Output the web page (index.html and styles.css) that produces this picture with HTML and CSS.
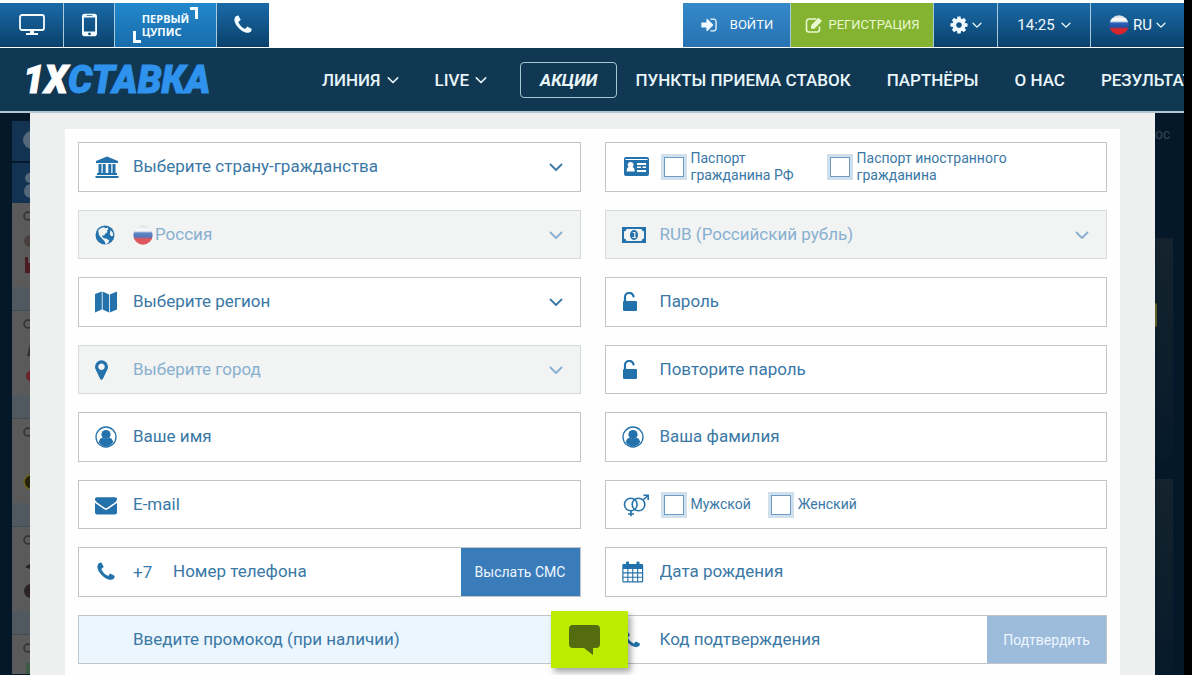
FILE: index.html
```html
<!DOCTYPE html>
<html lang="ru">
<head>
<meta charset="utf-8">
<meta name="viewport" content="width=device-width, initial-scale=1">
<title>1XСТАВКА — Регистрация</title>
<link rel="stylesheet" href="styles.css">
</head>
<body>
<svg class="sprite" aria-hidden="true">
  <symbol id="chevron" viewBox="0 0 14 14"><path d="M1.500 4.500 7 10l5.500-5.500" fill="none" stroke="currentColor" stroke-width="1.800" stroke-linecap="round" stroke-linejoin="round"/></symbol>
  <symbol id="phone" viewBox="0 0 1792 1792"><path d="M1600 1240q0 27-10 70.500t-21 68.500q-21 50-122 106-94 51-186 51-27 0-53-3.500t-57.500-12.500-47-14.500-55.500-20.500-49-18q-98-35-175-83-127-79-264-216t-216-264q-48-77-83-175-3-9-18-49t-20.500-55.500-14.500-47-12.500-57.500-3.500-53q0-92 51-186 56-101 106-122 25-11 68.500-21t70.500-10q14 0 21 3 18 6 53 76 11 19 30 54t35 63.500 31 53.500q3 4 17.500 25t21.500 35.500 7 28.500q0 20-28.500 50t-62 55-62 53-28.500 46q0 9 5 22.500t8.500 20.500 14 24 11.500 19q76 137 174 235t235 174q2 1 19 11.500t24 14 20.500 8.500 22.500 5q18 0 46-28.500t53-62 55-62 50-28.500q14 0 28.500 7t35.500 21.500 25 17.500q25 15 53.500 31t63.500 35 54 30q70 35 76 53 3 7 3 21z"/></symbol>
  <symbol id="flag" viewBox="0 0 20 20">
    <linearGradient id="stripes" x1="0" y1="0" x2="0" y2="1"><stop offset=".05" stop-color="#d9dde0"/><stop offset=".2" stop-color="#fafbfc"/><stop offset=".3" stop-color="#f4f6f8"/><stop offset=".4" stop-color="#2b63b8"/><stop offset=".6" stop-color="#1f4fa5"/><stop offset=".7" stop-color="#d8242c"/></linearGradient>
    <circle cx="10" cy="10" r="9.700" fill="url(#stripes)"/>
  </symbol>
  <symbol id="user" viewBox="0 0 22 22"><circle cx="11" cy="11" r="10" fill="none" stroke="currentColor" stroke-width="1.300"/><circle cx="11" cy="8.500" r="4.600"/><path d="M3.800 16c.6-3 2.300-4.200 4-4.300 1.900 1.700 4.500 1.700 6.400 0 1.700.1 3.400 1.300 4 4.300A9.500 9.500 0 0 1 11 20.500 9.500 9.500 0 0 1 3.800 16z"/></symbol>
  <symbol id="lock" viewBox="0 0 16 20"><path d="M3 10V5.500a4.300 4.300 0 0 1 8.500-1.200" fill="none" stroke="currentColor" stroke-width="2.200" stroke-linecap="round"/><rect x="1" y="9" width="14" height="10" rx="1"/></symbol>
</svg>

<header>
  <div class="topbar">
    <nav class="tools" aria-label="Приложения">
      <a class="tool tool-desktop" href="#" aria-label="Компьютер"><svg class="ic-desktop" viewBox="0 0 26 22"><rect x="1" y="1" width="24" height="15" rx="2" fill="none" stroke="currentColor" stroke-width="1.800"/><path d="M11 16h4v3h4v2H7v-2h4z"/></svg></a>
      <a class="tool tool-mobile" href="#" aria-label="Телефон"><svg class="ic-mobile" viewBox="0 0 16 24"><path fill-rule="evenodd" d="M3 0h10a3 3 0 0 1 3 3v18a3 3 0 0 1-3 3H3a3 3 0 0 1-3-3V3a3 3 0 0 1 3-3zM2 4v15h12V4zM5 1.500v1h6v-1zM8 20a1.500 1.500 0 1 0 .01 0z"/></svg></a>
      <a class="tool tool-wallet" href="#"><svg class="corner corner-bottom" viewBox="0 0 8 12"><path d="M0 0h3v9h5v3H0z"/></svg><span class="wallet-name"><span>ПЕРВЫЙ</span><span>ЦУПИС</span></span><svg class="corner" viewBox="0 0 8 12"><path d="M0 0h8v12H5V3H0z"/></svg></a>
      <a class="tool tool-call" href="#" aria-label="Позвонить"><svg class="ic-22"><use href="#phone"/></svg></a>
    </nav>
    <div class="account">
      <button class="tab tab-login" type="button"><svg class="ic-18" viewBox="0 0 1792 1792"><path d="M1312 896q0 26-19 45l-544 544q-19 19-45 19t-45-19-19-45v-288h-448q-26 0-45-19t-19-45v-384q0-26 19-45t45-19h448v-288q0-26 19-45t45-19 45 19l544 544q19 19 19 45zm352-352v704q0 119-84.500 203.500t-203.500 84.500h-320q-32 0-32-32v-64q0-32 32-32h320q66 0 113-47t47-113v-704q0-66-47-113t-113-47h-320q-32 0-32-32v-64q0-32 32-32h320q119 0 203.500 84.500t84.500 203.500z"/></svg>ВОЙТИ</button>
      <button class="tab tab-register" type="button"><svg class="ic-18" viewBox="0 0 18 18"><path d="M11 3H4a2.500 2.500 0 0 0-2.500 2.500v8A2.500 2.500 0 0 0 4 16h8a2.500 2.500 0 0 0 2.500-2.500V11" fill="none" stroke="currentColor" stroke-width="1.600" stroke-linecap="round"/><path d="m6 9.500 7.500-7.800L17 5l-7.500 7.800H6z"/></svg>РЕГИСТРАЦИЯ</button>
      <button class="tab tab-settings" type="button" aria-label="Настройки"><svg class="ic-20" viewBox="0 0 1792 1792"><path d="M1152 896q0-106-75-181t-181-75-181 75-75 181 75 181 181 75 181-75 75-181zm512-109v222q0 12-8 23t-20 13l-185 28q-19 54-39 91 35 50 107 138 10 12 10 25t-9 23q-27 37-99 108t-94 71q-12 0-26-9l-138-108q-44 23-91 38-16 136-29 186-7 28-36 28h-222q-14 0-24.500-8.500t-11.500-21.500l-28-184q-49-16-90-37l-141 107q-10 9-25 9-14 0-25-11-126-114-165-168-7-10-7-23 0-12 8-23 15-21 51-66.500t54-70.500q-27-50-41-99l-183-27q-13-2-21-12.500t-8-23.500v-222q0-12 8-23t19-13l186-28q14-46 39-92-40-57-107-138-10-12-10-24 0-10 9-23 26-36 98.500-107.500t94.500-71.500q13 0 26 10l138 107q44-23 91-38 16-136 29-186 7-28 36-28h222q14 0 24.500 8.500t11.500 21.500l28 184q49 16 90 37l142-107q9-9 24-9 13 0 25 10 129 119 165 170 7 8 7 22 0 12-8 23-15 21-51 66.500t-54 70.500q26 50 41 98l183 28q13 2 21 12.500t8 23.500z"/></svg><svg class="ic-10"><use href="#chevron"/></svg></button>
      <button class="tab tab-time" type="button">14:25<svg class="ic-10"><use href="#chevron"/></svg></button>
      <button class="tab tab-lang" type="button"><svg class="ic-20"><use href="#flag"/></svg>RU<svg class="ic-10"><use href="#chevron"/></svg></button>
    </div>
  </div>
  <div class="mainbar">
    <a class="logo" href="#"><span class="logo-mark">1X</span>СТАВКА</a>
    <nav class="menu" aria-label="Меню">
      <a href="#">ЛИНИЯ<svg class="ic-12"><use href="#chevron"/></svg></a>
      <a href="#">LIVE<svg class="ic-12"><use href="#chevron"/></svg></a>
      <a class="promo" href="#">АКЦИИ</a>
      <a href="#">ПУНКТЫ ПРИЕМА СТАВОК</a>
      <a href="#">ПАРТНЁРЫ</a>
      <a href="#">О НАС</a>
      <a href="#">РЕЗУЛЬТАТЫ</a>
    </nav>
  </div>
</header>

<main class="stage">
  <aside class="rail" aria-hidden="true">
    <div class="rail-tab"><svg viewBox="0 0 18 40"><circle cx="20" cy="19" r="9" fill="#56697a"/></svg></div>
    <div class="rail-tab"><svg viewBox="0 0 18 40"><circle cx="18" cy="15" r="5" fill="#56697a"/><circle cx="19" cy="28" r="7" fill="#56697a"/></svg></div>
    <div class="event"><svg viewBox="0 0 18 84"><circle cx="16" cy="13" r="4" fill="none" stroke="#2e2e2e" stroke-width="1.500"/><circle cx="18" cy="38" r="6" fill="#47403f"/><path d="M13 54h3v6h4v10h-7z" fill="#4a1b22"/></svg></div>
    <div class="odds"></div>
    <div class="event"><svg viewBox="0 0 18 84"><circle cx="16" cy="13" r="4" fill="none" stroke="#2e2e2e" stroke-width="1.500"/><path d="M18 33v12h-3z" fill="#303030"/><circle cx="19" cy="65" r="5" fill="#6a2227"/></svg></div>
    <div class="odds"></div>
    <div class="event"><svg viewBox="0 0 18 84"><circle cx="16" cy="13" r="4" fill="none" stroke="#2e2e2e" stroke-width="1.500"/><circle cx="19" cy="63" r="7" fill="#26220c" stroke="#6d661c" stroke-width="1.500"/></svg></div>
    <div class="odds"></div>
    <div class="event"><svg viewBox="0 0 18 84"><circle cx="16" cy="13" r="4" fill="none" stroke="#2e2e2e" stroke-width="1.500"/><path d="m13 40 5-3v5z" fill="#222"/><circle cx="19" cy="64" r="7" fill="#2a2424"/></svg></div>
    <div class="odds"></div>
    <div class="event event-last"><svg viewBox="0 0 18 84"><circle cx="16" cy="13" r="4" fill="none" stroke="#2e2e2e" stroke-width="1.500"/><rect x="14" y="28" width="6" height="20" fill="#3d5a45"/></svg></div>
  </aside>

  <section class="modal">
    <form class="form" aria-label="Регистрация">
      <div class="field">
        <span class="icon"><svg class="ic-24" viewBox="0 0 24 24"><path d="M12 1.500 23 6v2H1V6zM3.500 9h3v9h1.200V9h3v9h2.600V9h3v9h1.200V9h3v9H22v2H2v-2h1.500zM0.500 21h23v2h-23z"/></svg></span>
        <select aria-label="Гражданство"><option>Выберите страну-гражданства</option></select>
        <svg class="arrow"><use href="#chevron"/></svg>
      </div>
      <div class="field">
        <span class="icon"><svg class="ic-28" viewBox="0 0 28 28"><path fill-rule="evenodd" d="M4 4h21a2 2 0 0 1 2 2v15a2 2 0 0 1-2 2H4a2 2 0 0 1-2-2V6a2 2 0 0 1 2-2zM3.500 6v1h22V6zM8.500 9a2.800 2.800 0 0 0-1.800 5c-1.500.5-2 1.800-2 4.500h8c0-2.700-.7-4-2.200-4.500a2.800 2.800 0 0 0-2-5zM15 10v2h9v-2zM15 13.500v1.500h4v-1.500zM20.500 13.500v1.500H24v-1.500zM15 17v2h9v-2z"/></svg></span>
        <div class="choices choices-wide">
          <label class="choice"><input type="checkbox"><span>Паспорт<br>гражданина РФ</span></label>
          <label class="choice"><input type="checkbox"><span>Паспорт иностранного<br>гражданина</span></label>
        </div>
      </div>
      <div class="field is-disabled">
        <span class="icon"><svg class="ic-20" viewBox="0 0 20 20"><circle cx="10" cy="10" r="9.500"/><path fill="#f2f3f3" d="M3.200 5.500C4.500 3.600 7 2.200 9 2.200l1.500 1 2-.6 1 1.600-1.800 1.500 1 1.200-2.200 1.700-1.500 2-1.600-.4-.2 1.700 2 1.300 2.500.5 2.600 1.700-1.200 2.500-2.300 1.700-1-2.800-1.600-2-2.200-2.200-2-2.600zM15.500 5l2.200 2.600.6 3.200-2 .5-1.500-2z"/></svg></span>
        <svg class="ic-20 country"><use href="#flag"/></svg>
        <select aria-label="Страна" disabled><option>Россия</option></select>
        <svg class="arrow"><use href="#chevron"/></svg>
      </div>
      <div class="field is-disabled">
        <span class="icon"><svg class="ic-24" viewBox="0 0 24 24"><path fill-rule="evenodd" d="M0 4h24v16H0zM4.500 6A3 3 0 0 1 2 8.500v7A3 3 0 0 1 4.500 18h15a3 3 0 0 1 2.500-2.500v-7A3 3 0 0 1 19.500 6z"/><ellipse cx="12" cy="12" rx="4" ry="5"/><path d="M10.800 9.500h2v5M10.500 14.500h3.500" stroke="#f2f3f3" stroke-width="1.200" fill="none"/></svg></span>
        <select aria-label="Валюта" disabled><option>RUB (Российский рубль)</option></select>
        <svg class="arrow"><use href="#chevron"/></svg>
      </div>
      <div class="field">
        <span class="icon"><svg class="ic-22" viewBox="0 0 22 22"><path d="m0 3 6.800-2.500v18L0 21.500zM7.600.5 14 3.500v18l-6.400-3zM14.800 3.500 22 .5v18l-7.200 3z"/></svg></span>
        <select aria-label="Регион"><option>Выберите регион</option></select>
        <svg class="arrow"><use href="#chevron"/></svg>
      </div>
      <div class="field">
        <span class="icon"><svg class="ic-lock"><use href="#lock"/></svg></span>
        <input type="password" placeholder="Пароль" aria-label="Пароль">
      </div>
      <div class="field is-disabled">
        <span class="icon"><svg class="ic-pin" viewBox="384 128 1024 1536"><path d="M1152 640q0-106-75-181t-181-75-181 75-75 181 75 181 181 75 181-75 75-181zm256 0q0 109-33 179l-364 774q-16 33-47.500 52t-67.500 19-67.500-19-46.500-52l-365-774q-33-70-33-179 0-212 150-362t362-150 362 150 150 362z"/></svg></span>
        <select aria-label="Город" disabled><option>Выберите город</option></select>
        <svg class="arrow"><use href="#chevron"/></svg>
      </div>
      <div class="field">
        <span class="icon"><svg class="ic-lock"><use href="#lock"/></svg></span>
        <input type="password" placeholder="Повторите пароль" aria-label="Повторите пароль">
      </div>
      <div class="field">
        <span class="icon"><svg class="ic-22"><use href="#user"/></svg></span>
        <input type="text" placeholder="Ваше имя" aria-label="Ваше имя">
      </div>
      <div class="field">
        <span class="icon"><svg class="ic-22"><use href="#user"/></svg></span>
        <input type="text" placeholder="Ваша фамилия" aria-label="Ваша фамилия">
      </div>
      <div class="field">
        <span class="icon"><svg class="ic-22" viewBox="0 0 1792 1792"><path d="M1792 710v794q0 66-47 113t-113 47h-1472q-66 0-113-47t-47-113v-794q44 49 101 87 362 246 497 345 57 42 92.500 65.500t94.500 48 110 24.500h2q51 0 110-24.500t94.500-48 92.500-65.500q170-123 498-345 57-39 100-87zm0-294q0 79-49 151t-122 123q-376 261-468 325-10 7-42.500 31t-54 38.500-52 32.500-57.500 27-50 9h-2q-23 0-50-9t-57.500-27-52-32.500-54-38.500-42.500-31q-91-64-262-182.500t-205-142.500q-62-42-117-115.500t-55-136.500q0-78 41.500-130t118.500-52h1472q65 0 112.500 47t47.500 113z"/></svg></span>
        <input type="email" placeholder="E-mail" aria-label="E-mail">
      </div>
      <div class="field">
        <span class="icon"><svg class="ic-28" viewBox="0 0 28 28"><g fill="none" stroke="currentColor" stroke-width="1.600"><circle cx="8.800" cy="13.500" r="6.300"/><circle cx="16.500" cy="13.500" r="6.300"/><path d="M9 19.800v5.500M6 23h6M21 9 26 4.500M21.500 4.200H26.200V8.900"/></g></svg></span>
        <div class="choices">
          <label class="choice"><input type="checkbox"><span>Мужской</span></label>
          <label class="choice"><input type="checkbox"><span>Женский</span></label>
        </div>
      </div>
      <div class="field">
        <span class="icon"><svg class="ic-22"><use href="#phone"/></svg></span>
        <span class="code">+7</span>
        <input type="tel" placeholder="Номер телефона" aria-label="Номер телефона">
        <button class="action" type="button">Выслать СМС</button>
      </div>
      <div class="field">
        <span class="icon"><svg class="ic-22" viewBox="0 0 22 22"><path fill-rule="evenodd" d="M1.500 3H4V1.500Q4 .5 5 .5h1q1 0 1 1V3h7.500V1.500q0-1 1-1h1q1 0 1 1V3H20q1.200 0 1.200 1.200v16q0 1.300-1.200 1.300H1.500Q.3 21.500.3 20.200v-16Q.3 3 1.500 3zM1.500 8v3.300h3.800V8zM6.400 8v3.300h3.800V8zM11.300 8v3.300h3.800V8zM16.200 8v3.300H20V8zM1.500 12.400v3.300h3.800v-3.300zM6.400 12.400v3.300h3.800v-3.300zM11.300 12.400v3.300h3.800v-3.300zM16.200 12.400v3.300H20v-3.300zM1.500 16.800v3.400h3.800v-3.400zM6.400 16.800v3.400h3.800v-3.400zM11.300 16.800v3.400h3.800v-3.400zM16.200 16.800v3.400H20v-3.400z"/></svg></span>
        <input type="text" placeholder="Дата рождения" aria-label="Дата рождения">
      </div>
      <div class="field is-promo">
        <span class="icon"></span>
        <input type="text" placeholder="Введите промокод (при наличии)" aria-label="Промокод">
      </div>
      <div class="field">
        <span class="icon"><svg class="ic-20"><use href="#phone"/></svg></span>
        <input type="text" placeholder="Код подтверждения" aria-label="Код подтверждения">
        <button class="action" type="button" disabled>Подтвердить</button>
      </div>
    </form>
  </section>

  <aside class="side" aria-hidden="true">
    <div class="side-head">ос</div>
    <div class="side-card"><span class="spot"></span></div>
    <div class="side-card"></div>
  </aside>
</main>

<button class="chat" type="button" aria-label="Чат"><svg class="ic-chat" viewBox="0 0 32 30"><path d="M4 0h23a4 4 0 0 1 4 4v15a4 4 0 0 1-4 4h-3v7l-9-7H4a4 4 0 0 1-4-4V4a4 4 0 0 1 4-4z"/></svg></button>
</body>
</html>
```

FILE: styles.css
```css
* {
  box-sizing: border-box;
}

body {
  margin: 0;
  min-height: 100vh;
  display: flex;
  flex-direction: column;
  padding-right: 8px;
  background: #000;
  color: #3a78a6;
  font: 17px/20px Roboto, "Noto Sans", sans-serif;
}

a {
  color: inherit;
  text-decoration: none;
}

button,
input,
select {
  margin: 0;
  border: 0;
  padding: 0;
  background: none;
  color: inherit;
  font: inherit;
}

svg {
  display: block;
  flex: none;
  fill: currentColor;
}

.sprite {
  position: absolute;
  width: 0;
  height: 0;
}

.ic-10 { width: 10px; height: 10px; }
.ic-12 { width: 12px; height: 12px; }
.ic-18 { width: 18px; height: 18px; }
.ic-20 { width: 20px; height: 20px; }
.ic-22 { width: 22px; height: 22px; }
.ic-24 { width: 24px; height: 24px; }
.ic-28 { width: 28px; height: 28px; }
.ic-desktop { width: 26px; height: 22px; }
.ic-mobile { width: 15px; height: 24px; }
.ic-lock { width: 16px; height: 20px; }
.ic-pin { width: 13px; height: 20px; }
.ic-chat { width: 32px; height: 30px; }

/* Top bar */
.topbar {
  display: flex;
  justify-content: space-between;
  padding: 3px 0 1px;
  background: #fff;
}

.tools,
.account {
  display: flex;
  gap: 1px;
  height: 44px;
  background: #a9c9dc;
}

.tool,
.tab {
  display: flex;
  align-items: center;
  justify-content: center;
  background: linear-gradient(#1a6aa8, #0a416b);
  color: #f2fbff;
}

.tool-desktop { width: 63px; }
.tool-mobile { width: 50px; }
.tool-call { width: 52px; }

.tool-wallet {
  gap: 1px;
  width: 101px;
  background: linear-gradient(#2288cc, #186cab);
  font: 700 11px/12px "Noto Sans", sans-serif;
}

.wallet-name {
  display: grid;
  gap: 1px;
}

.corner {
  align-self: flex-start;
  width: 8px;
  height: 12px;
  margin: 4px 0;
}

.corner-bottom {
  align-self: flex-end;
}

.tab {
  gap: 6px;
  font-size: 15px;
}

.tab-login {
  gap: 12px;
  width: 107px;
  background: linear-gradient(#3489c9, #2872b0);
  font-size: 13px;
}

.tab-register {
  width: 142px;
  background: #83b331;
  color: #e9f8cf;
  font-size: 13px;
}

.tab-settings {
  gap: 3px;
  width: 63px;
}

.tab-time { width: 92px; }

.tab-lang {
  gap: 4px;
  width: 93px;
}

/* Main bar */
.mainbar {
  display: flex;
  align-items: center;
  height: 65px;
  padding-left: 23px;
  overflow: hidden;
  border-bottom: 2px solid #b5c8d2;
  background: #113852;
  color: #e8f6fa;
}

.logo {
  flex: none;
  width: 281px;
  color: #2f93ee;
  font: italic 900 38px/40px Roboto, sans-serif;
  -webkit-text-stroke: 1px currentColor;
}

.logo-mark {
  color: #fff;
}

.menu {
  display: flex;
  align-items: center;
  font-weight: 500;
  white-space: nowrap;
}

.menu a {
  display: flex;
  flex: none;
  align-items: center;
  gap: 6px;
  padding: 0 18px;
}

.menu .promo {
  margin-left: 15px;
  padding: 7px 19px;
  border: 1px solid #a4c6d2;
  border-radius: 4px;
  font-style: italic;
  font-weight: 700;
}

/* Dimmed page around the form */
.stage {
  display: flex;
  flex: 1;
  background: #04182a;
}

.rail {
  width: 30px;
  padding: 8px 0 0 12px;
}

.rail svg {
  width: 18px;
}

.rail-tab {
  height: 40px;
  margin-bottom: 2px;
  background: #123352;
}

.event {
  height: 84px;
  overflow: hidden;
  background: #5a5a5a;
}

.rail-tab + .event {
  margin-top: -2px;
}

.event-last {
  height: 39px;
}

.odds {
  height: 24px;
  border-bottom: 1px solid #414c52;
  background: #4f595f;
}

.side {
  width: 29px;
  overflow: hidden;
  padding-right: 11px;
}

.side-head {
  height: 125px;
  padding-top: 11px;
  color: #35454f;
  font-size: 14px;
}

.side-card {
  height: 221px;
  margin-bottom: 20px;
  padding-top: 65px;
  background: linear-gradient(#14232d, #071a2a);
}

.side-card:last-child {
  height: 196px;
  margin-bottom: 0;
}

.spot {
  display: block;
  width: 2px;
  height: 24px;
  border-radius: 0 3px 3px 0;
  background: #5b5d25;
}

/* Registration form */
.modal {
  flex: 1;
  min-width: 0;
  padding: 16px 35px 0;
  background: #eeefef;
}

.form {
  display: grid;
  grid-template-columns: 1fr 1fr;
  grid-auto-rows: 50px 49px;
  gap: 18px 24px;
  padding: 13px 13px 11px;
  background: #fefefe;
}

.field {
  display: flex;
  align-items: center;
  min-width: 0;
  padding-left: 16px;
  border: 1px solid #bfc5c8;
  background: #fff;
}

.icon {
  flex: none;
  width: 38px;
  color: #2472ab;
}

.field input:not([type="checkbox"]),
.field select {
  flex: 1;
  min-width: 0;
  height: 100%;
  padding-bottom: 2px;
  appearance: none;
  outline-color: #3a7bb9;
}

.field ::placeholder {
  color: #3a78a6;
  opacity: 1;
}

.arrow {
  width: 14px;
  height: 14px;
  margin-right: 17px;
}

.is-disabled {
  border-color: #d5dadb;
  background: #f2f3f3;
}

.is-disabled select,
.is-disabled .arrow {
  color: #87b0d0;
  opacity: 1;
}

.country {
  margin-right: 2px;
  opacity: .75;
}

.is-promo {
  background: #ebf6fe;
}

.code {
  width: 40px;
}

.choices {
  display: flex;
  gap: 20px;
  padding-left: 4px;
}

.choices-wide {
  gap: 36px;
}

.choice {
  display: flex;
  align-items: center;
  gap: 7px;
  font-size: 14px;
  line-height: 17px;
  white-space: nowrap;
}

.choice input {
  flex: none;
  width: 20px;
  height: 20px;
  appearance: none;
  border: 1px solid #6f9cc4;
  background: #fff;
  box-shadow: 0 0 0 3px #d0dfec;
}

.choice input:checked {
  background: #3a7bb9;
}

.action {
  flex: none;
  align-self: stretch;
  width: 119px;
  background: #3a7bb9;
  color: #eef7ff;
  font-size: 14px;
}

.action:disabled {
  background: #9dbbdb;
}

.chat {
  position: fixed;
  bottom: 7px;
  left: 551px;
  display: flex;
  align-items: center;
  justify-content: center;
  width: 77px;
  height: 57px;
  padding-right: 10px;
  background: #bcec00;
  box-shadow: 3px 4px 6px rgba(0, 0, 0, .35);
  color: #556b10;
}
```
